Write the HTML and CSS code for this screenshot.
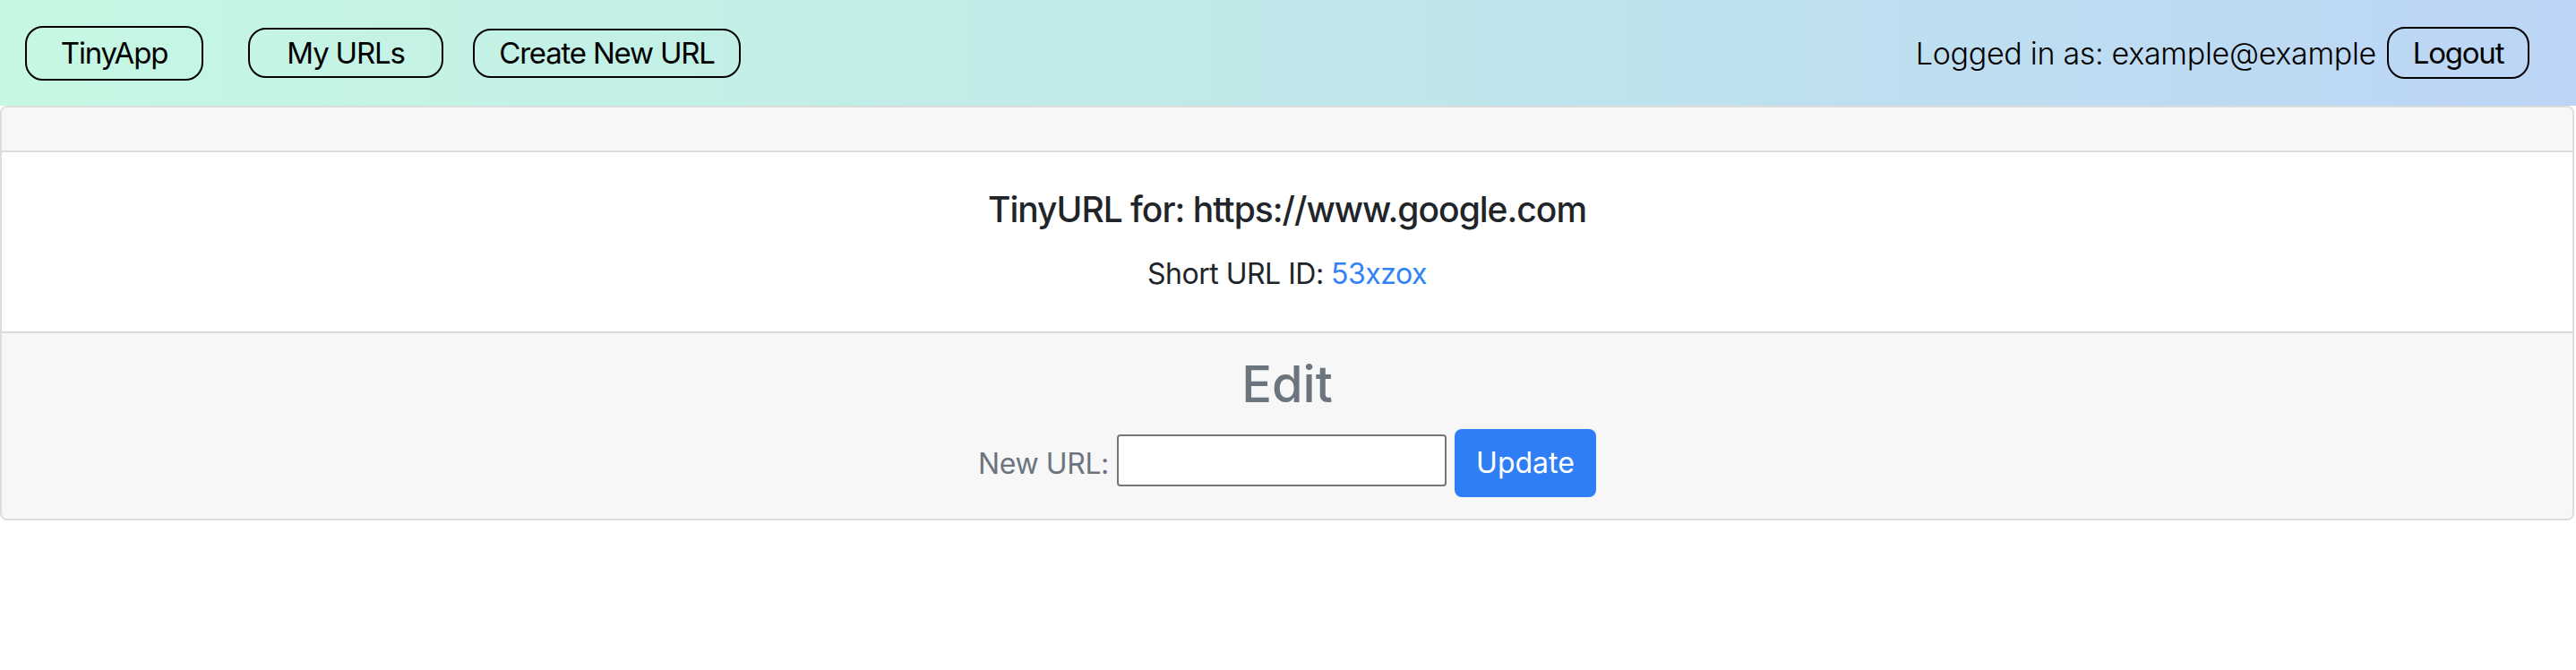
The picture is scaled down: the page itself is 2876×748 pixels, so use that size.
FILE: index.html
```html
<!DOCTYPE html>
<html lang="en">
<head>
<meta charset="utf-8">
<title>TinyApp</title>
<link rel="stylesheet" href="styles.css">
</head>
<body>
<nav class="navbar">
  <div class="nav-left">
    <a class="nav-btn brand" href="#">TinyApp</a>
    <a class="nav-btn urls" href="#">My URLs</a>
    <a class="nav-btn create" href="#">Create New URL</a>
  </div>
  <div class="nav-right">
    <span class="logged">Logged in as: example@example</span>
    <button class="nav-btn logout" type="button">Logout</button>
  </div>
</nav>
<main class="card">
  <div class="card-header"></div>
  <div class="card-body">
    <h5 class="card-title">TinyURL for: https://www.google.com</h5>
    <p class="card-text">Short URL ID: <a class="link" href="#">53xzox</a></p>
  </div>
  <div class="card-footer">
    <h3 class="edit-title">Edit</h3>
    <form class="edit-form">
      <label class="edit-label" for="newurl">New URL:</label>
      <input class="edit-input" id="newurl" type="text">
      <button class="btn-primary" type="button">Update</button>
    </form>
  </div>
</main>
</body>
</html>
```
FILE: styles.css
```css
* { box-sizing: border-box; }
html, body { margin: 0; padding: 0; background: #fff; }
body {
  font-family: Inter, "Noto Sans", "Liberation Sans", sans-serif;
  color: #212529;
}
.navbar {
  height: 118px;
  display: flex;
  align-items: center;
  justify-content: space-between;
  padding: 0 52px 0 28px;
  background: linear-gradient(to right, #c6f8e3 0%, #c0e8ea 50%, #bcd5f6 100%);
}
.nav-left { display: flex; align-items: center; }
.nav-right { display: flex; align-items: center; gap: 12px; }
.nav-btn {
  display: inline-flex;
  align-items: center;
  justify-content: center;
  border: 2px solid #000;
  border-radius: 20px;
  color: #000;
  text-decoration: none;
  font-family: Inter, "Liberation Sans", sans-serif;
  font-weight: 400;
  font-size: 33px;
  background: transparent;
  letter-spacing: -1.2px;
}
.brand { width: 199px; height: 61px; margin-right: 50px; }
.urls { width: 218px; height: 56px; margin-right: 33px; }
.create { width: 299px; height: 55px; }
.logged {
  font-weight: 300;
  font-size: 34px;
  color: #000;
  letter-spacing: -0.3px;
}
.logout { width: 159px; height: 58px; padding: 0; }
.card {
  display: block;
  width: 2874px;
  border: 2px solid #dcdcdc;
  border-radius: 8px;
  overflow: hidden;
}
.card-header {
  height: 50px;
  background: #f7f7f7;
  border-bottom: 2px solid #dcdcdc;
}
.card-body {
  padding: 40px;
  text-align: center;
  height: 200px;
}
.card-title {
  margin: 0 0 24px;
  font-size: 39px;
  font-weight: 500;
  line-height: 48px;
  letter-spacing: -1px;
  color: #212529;
}
.card-text {
  margin: 0;
  font-size: 32px;
  line-height: 48px;
  letter-spacing: -0.5px;
  color: #212529;
}
.link { color: #3182f6; text-decoration: none; }
.card-footer {
  background: #f7f7f7;
  border-top: 2px solid #dcdcdc;
  padding: 24px 40px;
  text-align: center;
}
.edit-title {
  margin: 0 0 16px;
  font-size: 56px;
  font-weight: 500;
  line-height: 67px;
  color: #6c757d;
}
.edit-form {
  display: flex;
  justify-content: center;
  align-items: center;
  gap: 9px;
}
.edit-label {
  font-size: 32px;
  letter-spacing: -0.4px;
  color: #6c757d;
}
.edit-input {
  width: 368px;
  height: 58px;
  border: 2px solid #767676;
  border-radius: 4px;
  background: #fff;
  margin-top: -6px;
}
.btn-primary {
  height: 76px;
  width: 158px;
  border: 0;
  border-radius: 8px;
  background: #2f7ef5;
  color: #fff;
  font-family: Inter, "Liberation Sans", sans-serif;
  font-size: 32px;
  line-height: 48px;
  padding: 12px 24px;
}
```
